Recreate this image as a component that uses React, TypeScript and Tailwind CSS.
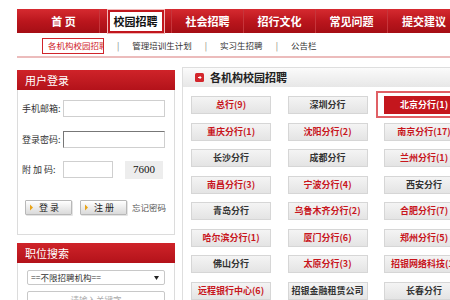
const navItems = ["首 页", "校园招聘", "社会招聘", "招行文化", "常见问题", "提交建议"];

const subItems = ["管理培训生计划", "实习生招聘", "公告栏"];

type Branch = { name: string; hot?: boolean; active?: boolean };

const branches: Branch[] = [
  { name: "总行(9)", hot: true },
  { name: "深圳分行" },
  { name: "北京分行(1)", active: true },
  { name: "重庆分行(1)", hot: true },
  { name: "沈阳分行(2)", hot: true },
  { name: "南京分行(17)", hot: true },
  { name: "长沙分行" },
  { name: "成都分行" },
  { name: "兰州分行(1)", hot: true },
  { name: "南昌分行(3)", hot: true },
  { name: "宁波分行(4)", hot: true },
  { name: "西安分行" },
  { name: "青岛分行" },
  { name: "乌鲁木齐分行(2)", hot: true },
  { name: "合肥分行(7)", hot: true },
  { name: "哈尔滨分行(1)", hot: true },
  { name: "厦门分行(6)", hot: true },
  { name: "郑州分行(5)", hot: true },
  { name: "佛山分行" },
  { name: "太原分行(3)", hot: true },
  { name: "招银网络科技(1)", hot: true },
  { name: "远程银行中心(6)", hot: true },
  { name: "招银金融租赁公司" },
  { name: "长春分行" },
];

function Arrow() {
  return (
    <svg width="5" height="7" viewBox="0 0 5 7" aria-hidden>
      <path d="M1 0.5L4 3.5L1 6.5Z" fill="#e8a317" />
    </svg>
  );
}

function LoginRow({ label, children }: { label: string; children: React.ReactNode }) {
  return (
    <div className="flex h-[17px] items-center">
      <span className="w-[41px] text-[9px] leading-none text-[#333]">{label}</span>
      {children}
    </div>
  );
}

export default function App() {
  return (
    <div className="h-[300px] w-[450px] overflow-hidden bg-white font-['Noto_Sans_CJK_SC',sans-serif]">
      {/* top nav */}
      <nav className="ml-[17px] mt-[9px] flex h-[24px] w-[520px] bg-gradient-to-b from-[#d62a30] via-[#bb161d] to-[#a50e15] pl-[11px]">
        {navItems.map((it, i) => (
          <div
            key={it}
            className={`flex w-[72px] shrink-0 items-center justify-center ${
              i < navItems.length - 1 ? "border-r border-[#c6353b]" : ""
            }`}
          >
            {i === 1 ? (
              <span className="mt-[2px] flex h-[23px] w-[56px] items-center justify-center self-end border-2 border-[#c1161d] bg-white text-[11px] font-bold text-[#111] shadow-[0_0_0_1px_#f2b8b8]">
                {it}
              </span>
            ) : (
              <span className="text-[11px] font-bold text-white">{it}</span>
            )}
          </div>
        ))}
      </nav>

      {/* sub nav */}
      <div className="ml-[17px] flex h-[25px] items-center gap-[13px] border-b-2 border-[#ecbcbc] pl-[25px] pt-[2px] text-[8.5px] text-[#333]">
        <span className="flex h-[16px] w-[62px] items-center overflow-hidden whitespace-nowrap border border-[#d0242a] pl-[5px] text-[#d0242a]">
          各机构校园招聘
        </span>
        {subItems.map((s) => (
          <span key={s} className="flex items-center gap-[13px]">
            <span className="text-[#777]">|</span>
            <span>{s}</span>
          </span>
        ))}
      </div>

      <div className="flex items-start">
        {/* left column */}
        <div className="ml-[17px] mt-[12px] w-[158px] shrink-0">
          <div className="flex h-[20px] items-center bg-gradient-to-b from-[#cf2329] to-[#b3121a] pl-[8px] text-[11px] text-white">
            用户登录
          </div>
          <div className="h-[145px] border border-t-0 border-[#dcdcdc] pl-[4px] pt-[10px]">
            <LoginRow label="手机邮箱:">
              <input readOnly className="h-[17px] w-[102px] border border-[#cfcfcf] bg-white outline-none" />
            </LoginRow>
            <div className="mt-[14px]">
              <LoginRow label="登录密码:">
                <input
                  readOnly
                  className="h-[17px] w-[102px] border border-[#cfcfcf] border-l-[#777] border-t-[#777] bg-white outline-none"
                />
              </LoginRow>
            </div>
            <div className="mt-[13px]">
              <LoginRow label="附 加 码:">
                <input readOnly className="h-[17px] w-[50px] border border-[#cfcfcf] bg-white outline-none" />
                <span className="ml-[12px] flex h-[18px] w-[38px] items-center justify-center bg-[#ededed] font-['Liberation_Serif',serif] text-[11px] text-[#111]">
                  7600
                </span>
              </LoginRow>
            </div>
            <div className="mt-[22px] flex items-center pl-[3px]">
              {["登 录", "注 册"].map((b) => (
                <span
                  key={b}
                  className="mr-[8px] flex h-[15px] w-[47px] items-center gap-[5px] rounded-[1px] border border-[#b8b8b8] bg-gradient-to-b from-white to-[#dadada] pl-[3px] text-[9px] leading-none text-[#222] shadow-[1px_1px_0_#e4e4e4]"
                >
                  <Arrow />
                  {b}
                </span>
              ))}
              <span className="-ml-[3px] text-[8.5px] text-[#555]">忘记密码</span>
            </div>
          </div>

          <div className="mt-[8px] flex h-[20px] items-center bg-gradient-to-b from-[#cf2329] to-[#b3121a] pl-[8px] text-[11px] text-white">
            职位搜索
          </div>
          <div className="h-[60px] border border-t-0 border-[#dcdcdc] pl-[9px] pt-[7px]">
            <div className="flex h-[15px] w-[138px] items-center justify-between rounded-[2px] border border-[#c8c8c8] bg-white pl-[3px] pr-[5px] text-[8.5px] text-[#333]">
              <span>==不限招聘机构==</span>
              <svg width="5" height="4" viewBox="0 0 5 4" aria-hidden>
                <path d="M0 0H5L2.5 4Z" fill="#222" />
              </svg>
            </div>
            <div className="mt-[6px] flex h-[16px] w-[138px] items-center justify-center rounded-[2px] border border-[#c8c8c8] text-[8.5px] text-[#aaa]">
              请输入关键字
            </div>
          </div>
        </div>

        {/* right panel */}
        <div className="ml-[7px] mt-[9px] h-[260px] w-[300px] shrink-0 border border-[#dedede]">
          <div className="flex h-[19px] items-center gap-[6px] bg-gradient-to-b from-[#fbfbfb] to-[#e7e7e7] pl-[12px]">
            <svg width="9" height="9" viewBox="0 0 9 9" aria-hidden>
              <rect width="9" height="9" rx="1.5" fill="#d3262c" />
              <path d="M3 4.5H6M4.6 3L6 4.5L4.6 6" stroke="#fff" strokeWidth="1" fill="none" />
            </svg>
            <span className="text-[11px] font-bold text-[#222]">各机构校园招聘</span>
          </div>
          <div className="grid grid-cols-[80px_80px_80px] gap-x-[16.5px] gap-y-[8.5px] pl-[8px] pt-[9px]">
            {branches.map((b) => (
              <div
                key={b.name}
                className={`relative flex h-[18px] items-center justify-center whitespace-nowrap text-[9px] font-semibold ${
                  b.active
                    ? "bg-[#c4161d] text-white"
                    : `border border-[#d6d6d6] bg-gradient-to-b from-[#f4f4f4] to-[#e4e4e4] ${
                        b.hot ? "text-[#c8161d]" : "text-[#333]"
                      }`
                }`}
              >
                {b.active && (
                  <span className="absolute -bottom-[4px] -left-[8px] -right-[8px] -top-[5px] border-2 border-[#e06065]" />
                )}
                {b.name}
              </div>
            ))}
          </div>
        </div>
      </div>
    </div>
  );
}
